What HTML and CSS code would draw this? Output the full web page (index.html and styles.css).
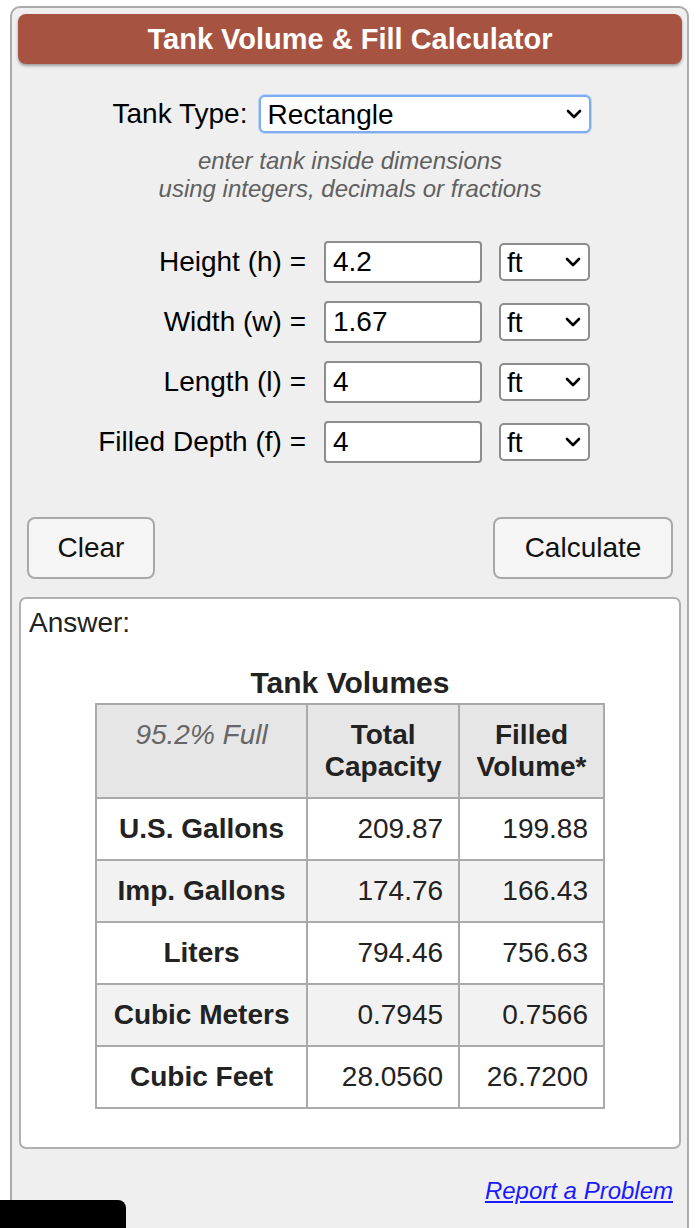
FILE: index.html
```html
<!DOCTYPE html>
<html lang="en">
<head>
<meta charset="utf-8">
<title>Tank Volume &amp; Fill Calculator</title>
<link rel="stylesheet" href="styles.css">
</head>
<body>
<div class="calc">
  <div class="title">Tank Volume &amp; Fill Calculator</div>

  <div class="type-row">
    <label class="type-label">Tank Type:</label>
    <div class="sel-wrap type-sel">
      <select class="sel sel-focus"><option>Rectangle</option></select>
      <svg class="chev" viewBox="0 0 16 10" width="16" height="10"><polyline points="2,2 8,8 14,2"/></svg>
    </div>
  </div>

  <p class="hint">enter tank inside dimensions<br>using integers, decimals or fractions</p>

  <div class="dims">
    <label class="dim-label">Height (h) =</label>
    <input class="dim-input" type="text" value="4.2">
    <div class="sel-wrap unit-sel">
      <select class="sel"><option>ft</option></select>
      <svg class="chev" viewBox="0 0 16 10" width="16" height="10"><polyline points="2,2 8,8 14,2"/></svg>
    </div>

    <label class="dim-label">Width (w) =</label>
    <input class="dim-input" type="text" value="1.67">
    <div class="sel-wrap unit-sel">
      <select class="sel"><option>ft</option></select>
      <svg class="chev" viewBox="0 0 16 10" width="16" height="10"><polyline points="2,2 8,8 14,2"/></svg>
    </div>

    <label class="dim-label">Length (l) =</label>
    <input class="dim-input" type="text" value="4">
    <div class="sel-wrap unit-sel">
      <select class="sel"><option>ft</option></select>
      <svg class="chev" viewBox="0 0 16 10" width="16" height="10"><polyline points="2,2 8,8 14,2"/></svg>
    </div>

    <label class="dim-label">Filled Depth (f) =</label>
    <input class="dim-input" type="text" value="4">
    <div class="sel-wrap unit-sel">
      <select class="sel"><option>ft</option></select>
      <svg class="chev" viewBox="0 0 16 10" width="16" height="10"><polyline points="2,2 8,8 14,2"/></svg>
    </div>
  </div>

  <div class="buttons">
    <button class="btn btn-clear">Clear</button>
    <button class="btn btn-calc">Calculate</button>
  </div>

  <div class="answer">
    <div class="answer-label">Answer:</div>
    <div class="vol-title">Tank Volumes</div>
    <table class="vol-table">
      <colgroup><col class="c1"><col class="c2"><col class="c3"></colgroup>
      <thead>
        <tr><th class="pct">95.2% Full</th><th>Total<br>Capacity</th><th>Filled<br>Volume*</th></tr>
      </thead>
      <tbody>
        <tr><td class="unit">U.S. Gallons</td><td>209.87</td><td>199.88</td></tr>
        <tr class="alt"><td class="unit">Imp. Gallons</td><td>174.76</td><td>166.43</td></tr>
        <tr><td class="unit">Liters</td><td>794.46</td><td>756.63</td></tr>
        <tr class="alt"><td class="unit">Cubic Meters</td><td>0.7945</td><td>0.7566</td></tr>
        <tr><td class="unit">Cubic Feet</td><td>28.0560</td><td>26.7200</td></tr>
      </tbody>
    </table>
  </div>

  <div class="report"><a href="#">Report a Problem</a></div>
</div>
<div class="corner-bar"></div>
</body>
</html>
```

FILE: styles.css
```css
html, body {
  margin: 0;
  padding: 0;
  overflow: hidden;
  background: #ffffff;
}

.calc {
  margin: 6px 7px 0 10px;
  border: 2px solid #ababab;
  border-radius: 10px;
  background: #efefef;
  padding: 6px 5px 60px 6px;
  font-family: "Liberation Sans", Arial, Helvetica, sans-serif;
  color: #000;
}

.title {
  height: 50px;
  line-height: 50px;
  background: #a75341;
  color: #fff;
  font-weight: bold;
  font-size: 29px;
  text-align: center;
  border-radius: 8px;
  box-shadow: 0 2px 3px rgba(0, 0, 0, 0.35);
}

.type-row {
  display: flex;
  justify-content: center;
  align-items: center;
  gap: 12px;
  margin-top: 31px;
}

.type-label {
  font-size: 28px;
  padding-left: 4px;
}

.sel-wrap {
  position: relative;
}

.type-sel {
  width: 332px;
  height: 38px;
}

.unit-sel {
  width: 91px;
  height: 38px;
}

.sel {
  -webkit-appearance: none;
  appearance: none;
  width: 100%;
  height: 100%;
  box-sizing: border-box;
  border: 2px solid #8d8d8d;
  border-radius: 5px;
  background: #fff;
  font-family: "Liberation Sans", Arial, sans-serif;
  font-size: 28px;
  color: #000;
  padding: 0 0 0 6px;
  margin: 0;
}

.sel-focus {
  border: 2px solid #7eacee;
  box-shadow: 0 0 0 1px #bcd4f6;
  border-radius: 6px;
}

.chev {
  position: absolute;
  right: 9px;
  top: 14px;
  fill: none;
  stroke: #000;
  stroke-width: 2.6;
  stroke-linecap: round;
  stroke-linejoin: round;
  pointer-events: none;
}

.hint {
  margin: 14px 0 0;
  text-align: center;
  font-style: italic;
  color: #606060;
  font-size: 24px;
  line-height: 28px;
}

.dims {
  display: grid;
  grid-template-columns: 289px 158px 91px;
  column-gap: 17px;
  row-gap: 18px;
  align-items: center;
  margin-top: 38px;
}

.dim-label {
  font-size: 28px;
  text-align: right;
  padding-right: 1px;
}

.dim-input {
  height: 42px;
  box-sizing: border-box;
  border: 2px solid #8d8d8d;
  border-radius: 4px;
  background: #fff;
  font-family: "Liberation Sans", Arial, sans-serif;
  font-size: 28px;
  color: #000;
  padding: 0 7px;
  width: 158px;
  margin: 0;
}

.buttons {
  display: flex;
  justify-content: space-between;
  margin-top: 54px;
  padding: 0 9px;
}

.btn {
  height: 62px;
  font-family: "Liberation Sans", Arial, sans-serif;
  font-size: 28px;
  color: #111;
  background: #f5f5f5;
  border: 2px solid #a8a8a8;
  border-radius: 8px;
  padding: 0;
}

.btn-clear { width: 128px; }
.btn-calc { width: 180px; }

.answer {
  margin: 18px 1px 0;
  border: 2px solid #b0b0b0;
  border-radius: 7px;
  background: #fff;
  padding: 8px 8px 38px;
}

.answer-label {
  font-size: 28px;
  line-height: 32px;
  color: #222;
}

.vol-title {
  margin-top: 26px;
  font-size: 30px;
  line-height: 36px;
  font-weight: bold;
  text-align: center;
  color: #222;
}

.vol-table {
  margin: 2px auto 0;
  border-collapse: collapse;
  border: 2px solid #aaa;
  width: 510px;
}

.vol-table .c1 { width: 213px; }
.vol-table .c2 { width: 152px; }
.vol-table .c3 { width: 145px; }

.vol-table th,
.vol-table td {
  border: 2px solid #aaa;
  font-size: 28px;
  line-height: 32px;
  color: #222;
  padding: 14px 15px;
}

.vol-table th {
  background: #e6e6e6;
  font-weight: bold;
  vertical-align: top;
  text-align: center;
}

.vol-table th.pct {
  font-weight: normal;
  font-style: italic;
  color: #666;
}

.vol-table td {
  text-align: right;
  background: #fff;
}

.vol-table td.unit {
  text-align: center;
  font-weight: bold;
}

.vol-table tr.alt td {
  background: #f2f2f2;
}

.report {
  margin-top: 28px;
  padding-right: 9px;
  text-align: right;
  font-size: 24px;
  line-height: 28px;
  font-style: italic;
}

.report a {
  color: #1a1aff;
  text-decoration: underline;
}

.corner-bar {
  position: fixed;
  left: 0;
  bottom: 0;
  width: 126px;
  height: 28px;
  background: #000;
  border-top-right-radius: 8px;
}
```
